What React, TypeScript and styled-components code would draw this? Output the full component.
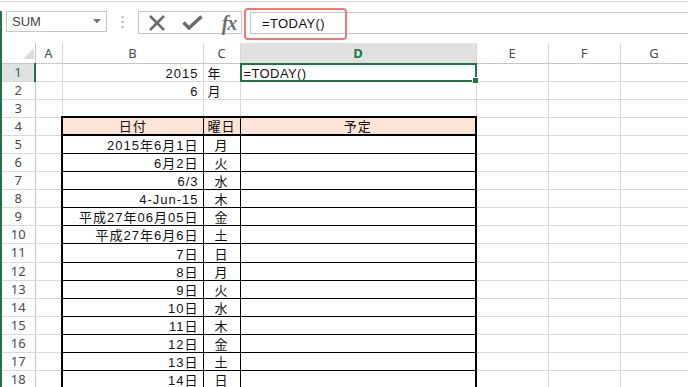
import React from "react";
import styled, { createGlobalStyle, css } from "styled-components";

const GREEN = "#217346";
const GRID = "#dadada";
const HEAD_LINE = "#c6c6c6";
const CELL_FONT = `"Liberation Sans", "Noto Sans CJK JP", sans-serif`;
const UI_FONT = `"Noto Sans", "Liberation Sans", sans-serif`;

const Global = createGlobalStyle`
  html, body { margin: 0; padding: 0; background: #fff; }
  body { overflow: hidden; }
`;

const Frame = styled.div`
  width: 688px;
  height: 387px;
  padding-top: 1px;
  box-sizing: border-box;
  display: flex;
  flex-direction: column;
  overflow: hidden;
  background: #fff;
`;

const Toolbar = styled.div`
  position: relative;
  border-top: 1px solid #d6d6d6;
  padding-top: 9px;
  height: 42px;
  flex-shrink: 0;
  box-sizing: border-box;
  display: flex;
`;

const ToolRow = styled.div`
  flex: 1;
  display: flex;
  align-items: flex-start;
  border-left: 2px solid ${GREEN};
`;

const NameBox = styled.div`
  margin-left: 4px;
  width: 101px;
  height: 21px;
  box-sizing: border-box;
  border: 1px solid ${HEAD_LINE};
  display: flex;
  align-items: center;
  justify-content: space-between;
  padding: 0 5px 0 5px;
  font-family: "Liberation Sans", sans-serif;
  font-size: 13px;
  color: #444;
`;

const Grip = styled.div`
  width: 31px;
  height: 21px;
  display: flex;
  align-items: center;
  justify-content: center;
`;

const ButtonGroup = styled.div`
  width: 104px;
  height: 23px;
  box-sizing: border-box;
  border: 1px solid ${HEAD_LINE};
  display: flex;
  align-items: center;
  padding-left: 8px;
`;

const IconSlot = styled.div<{ $w: number }>`
  width: ${(p) => p.$w}px;
  display: flex;
  align-items: center;
  justify-content: center;
`;

const Fx = styled.span`
  font-family: "Liberation Serif", serif;
  font-style: italic;
  font-weight: bold;
  font-size: 20px;
  color: #6e6e6e;
  line-height: 20px;
  letter-spacing: -1px;
`;

const FormulaBox = styled.div`
  flex: 1;
  margin-left: 8px;
  margin-top: 1px;
  height: 22px;
  box-sizing: border-box;
  border: 1px solid ${HEAD_LINE};
  border-right: none;
  display: flex;
  align-items: center;
  padding-left: 11px;
  font-family: ${CELL_FONT};
  font-size: 13px;
  letter-spacing: 0.4px;
  color: #111;
`;

const Highlight = styled.div`
  position: absolute;
  left: 244px;
  top: 6px;
  width: 103px;
  height: 32px;
  box-sizing: border-box;
  border: 2.5px solid #f27676;
  border-radius: 4px;
  pointer-events: none;
`;

const SheetArea = styled.div`
  flex: 1;
  min-height: 0;
  border-left: 2px solid ${GREEN};
  overflow: hidden;
`;

const Sheet = styled.table`
  border-collapse: collapse;
  table-layout: fixed;
  width: 686px;
`;

const HeadRow = styled.tr`
  height: 20px;
`;

const BodyRow = styled.tr`
  height: 18.1px;
`;

const Corner = styled.th`
  padding: 0;
  line-height: 12px;
  border-right: 1px solid ${HEAD_LINE};
  border-bottom: 1px solid ${HEAD_LINE};
  vertical-align: bottom;
`;

const CornerInner = styled.div`
  display: flex;
  justify-content: flex-end;
  padding: 0 1px 4px 0;
`;

const ColHead = styled.th<{ $sel?: boolean }>`
  padding: 0;
  line-height: 14px;
  font-family: ${UI_FONT};
  font-size: 13px;
  font-weight: 400;
  color: #4a4a4a;
  text-align: center;
  border-left: 1px solid #d6d6d6;
  border-right: 1px solid #d6d6d6;
  border-bottom: 1px solid ${HEAD_LINE};
  ${(p) =>
    p.$sel &&
    css`
      background: #e1e1e1;
      color: ${GREEN};
      font-weight: 700;
    `}
`;

const RowHead = styled.th<{ $sel?: boolean }>`
  padding: 0;
  line-height: 13px;
  font-family: ${UI_FONT};
  font-size: 13px;
  font-weight: 400;
  color: #4a4a4a;
  text-align: center;
  border-right: 1px solid ${HEAD_LINE};
  border-bottom: 1px solid ${GRID};
  ${(p) =>
    p.$sel &&
    css`
      background: #e1e1e1;
      color: ${GREEN};
      border-right: 2px solid ${GREEN};
    `}
`;

type Align = "left" | "right" | "center";

const Cell = styled.td<{ $align?: Align }>`
  padding: 0 4px;
  border: 1px solid ${GRID};
  font-family: ${CELL_FONT};
  font-size: 13px;
  letter-spacing: 1px;
  color: #111;
  white-space: nowrap;
  overflow: visible;
  text-align: ${(p) => p.$align ?? "left"};
  vertical-align: bottom;
  line-height: 14px;
`;

const TableCell = styled(Cell)<{ $edge?: "first" | "last"; $head?: boolean }>`
  border: 1px solid #000;
  ${(p) => p.$edge === "first" && css`border-left: 2px solid #000;`}
  ${(p) => p.$edge === "last" && css`border-right: 2px solid #000;`}
  ${(p) =>
    p.$head &&
    css`
      background: #fce4d6;
      border-top: 2px solid #000;
      border-bottom: 2px solid #000;
    `}
`;

const ActiveCell = styled(Cell)`
  position: relative;
  letter-spacing: 0.4px;
  padding-left: 3px;
`;

const SelectionBox = styled.div`
  position: absolute;
  left: -1px;
  top: -1px;
  right: -1px;
  bottom: -1px;
  border: 2px solid ${GREEN};
  pointer-events: none;
`;

const FillHandle = styled.div`
  position: absolute;
  right: -4px;
  bottom: -4px;
  width: 5px;
  height: 5px;
  background: ${GREEN};
  border: 1px solid #fff;
`;

const widths = [33, 27, 141, 37, 236, 72, 72, 68];
const letters = ["A", "B", "C", "D", "E", "F", "G"];

type DataRow = { n: number; b?: string; c?: string; head?: boolean; table?: boolean };

const days: [string, string][] = [
  ["2015年6月1日", "月"],
  ["6月2日", "火"],
  ["6/3", "水"],
  ["4-Jun-15", "木"],
  ["平成27年06月05日", "金"],
  ["平成27年6月6日", "土"],
  ["7日", "日"],
  ["8日", "月"],
  ["9日", "火"],
  ["10日", "水"],
  ["11日", "木"],
  ["12日", "金"],
  ["13日", "土"],
  ["14日", "日"],
];

const rows: DataRow[] = [
  { n: 1, b: "2015", c: "年" },
  { n: 2, b: "6", c: "月" },
  { n: 3 },
  { n: 4, head: true, table: true },
  ...days.map(([b, c], i) => ({ n: 5 + i, b, c, table: true })),
];

const Blank = () => (
  <>
    <Cell />
    <Cell />
    <Cell />
  </>
);

const CrossIcon = () => (
  <svg width="18" height="16" viewBox="0 0 18 16">
    <path d="M2 1 L16 15 M16 1 L2 15" stroke="#6b6b6b" strokeWidth="2.6" fill="none" />
  </svg>
);

const CheckIcon = () => (
  <svg width="21" height="15" viewBox="0 0 21 15">
    <path d="M1.5 7.5 L7 13 L19.5 1.5" stroke="#6b6b6b" strokeWidth="3.4" fill="none" />
  </svg>
);

const DropArrow = () => (
  <svg width="8" height="5" viewBox="0 0 8 5">
    <path d="M0 0 H8 L4 4.5 Z" fill="#7a7a7a" />
  </svg>
);

const GripDots = () => (
  <svg width="3" height="12" viewBox="0 0 3 12">
    <rect x="0.5" y="0" width="2" height="2" fill="#b5b5b5" />
    <rect x="0.5" y="5" width="2" height="2" fill="#b5b5b5" />
    <rect x="0.5" y="10" width="2" height="2" fill="#b5b5b5" />
  </svg>
);

const CornerTriangle = () => (
  <svg width="11" height="11" viewBox="0 0 11 11" style={{ display: "block" }}>
    <path d="M11 0 V11 H0 Z" fill="#dcdcdc" />
  </svg>
);

export default function App() {
  return (
    <>
      <Global />
      <Frame>
        <Toolbar>
          <ToolRow>
            <NameBox>
              <span>SUM</span>
              <DropArrow />
            </NameBox>
            <Grip>
              <GripDots />
            </Grip>
            <ButtonGroup>
              <IconSlot $w={20}>
                <CrossIcon />
              </IconSlot>
              <IconSlot $w={14} />
              <IconSlot $w={22}>
                <CheckIcon />
              </IconSlot>
              <IconSlot $w={16} />
              <IconSlot $w={20}>
                <Fx>fx</Fx>
              </IconSlot>
            </ButtonGroup>
            <FormulaBox>=TODAY()</FormulaBox>
          </ToolRow>
          <Highlight />
        </Toolbar>
        <SheetArea>
          <Sheet>
            <colgroup>
              {widths.map((w, i) => (
                <col key={i} style={{ width: w }} />
              ))}
            </colgroup>
            <thead>
              <HeadRow>
                <Corner>
                  <CornerInner>
                    <CornerTriangle />
                  </CornerInner>
                </Corner>
                {letters.map((l) => (
                  <ColHead key={l} $sel={l === "D"}>
                    {l}
                  </ColHead>
                ))}
              </HeadRow>
            </thead>
            <tbody>
              {rows.map((r) => (
                <BodyRow key={r.n}>
                  <RowHead $sel={r.n === 1}>{r.n}</RowHead>
                  <Cell />
                  {r.table ? (
                    r.head ? (
                      <>
                        <TableCell $edge="first" $head $align="center">日付</TableCell>
                        <TableCell $head $align="center">曜日</TableCell>
                        <TableCell $edge="last" $head $align="center">予定</TableCell>
                      </>
                    ) : (
                      <>
                        <TableCell $edge="first" $align="right">{r.b}</TableCell>
                        <TableCell $align="center">{r.c}</TableCell>
                        <TableCell $edge="last" />
                      </>
                    )
                  ) : (
                    <>
                      <Cell $align="right">{r.b}</Cell>
                      <Cell>{r.c}</Cell>
                      {r.n === 1 ? (
                        <ActiveCell>
                          =TODAY()
                          <SelectionBox>
                            <FillHandle />
                          </SelectionBox>
                        </ActiveCell>
                      ) : (
                        <Cell />
                      )}
                    </>
                  )}
                  <Blank />
                </BodyRow>
              ))}
            </tbody>
          </Sheet>
        </SheetArea>
      </Frame>
    </>
  );
}
